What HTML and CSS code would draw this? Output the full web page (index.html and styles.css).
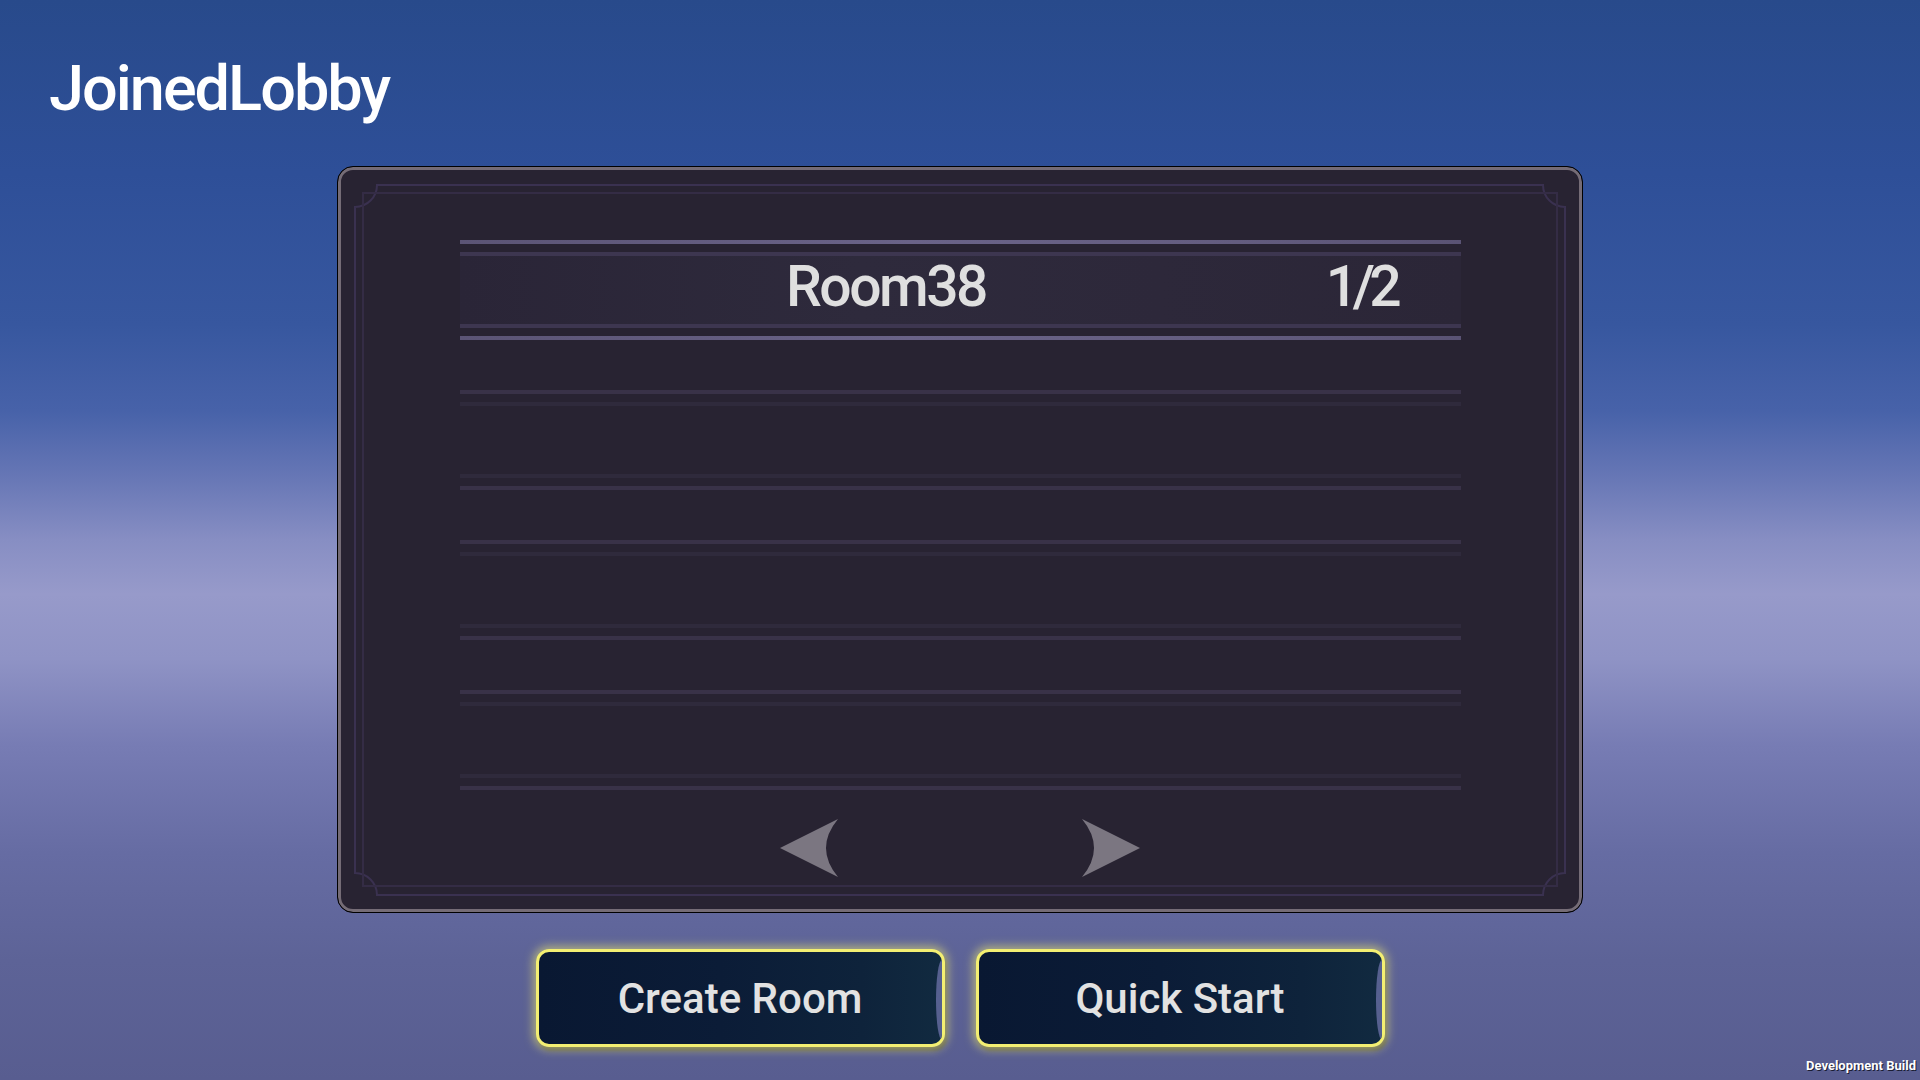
FILE: index.html
```html
<!DOCTYPE html>
<html lang="en">
<head>
<meta charset="utf-8">
<title>JoinedLobby</title>
<link rel="stylesheet" href="styles.css">
</head>
<body>
<div class="screen">
  <h1 class="title">JoinedLobby</h1>

  <section class="panel">
    <svg class="frame" width="1246" height="747" viewBox="0 0 1246 747" aria-hidden="true">
      <path d="M40 19 H1206 A22 22 0 0 0 1228 41 V707 A22 22 0 0 0 1206 729 H40 A22 22 0 0 0 18 707 V41 A22 22 0 0 0 40 19 Z" fill="none" stroke="#3a3150" stroke-width="2"/>
      <rect x="26" y="27" width="1194" height="693" fill="none" stroke="#342c45" stroke-width="2"/>
    </svg>

    <div class="room-list">
      <div class="room room-filled">
        <div class="room-inner">
          <span class="room-name">Room38</span>
          <span class="room-count">1/2</span>
          <span></span>
        </div>
      </div>
      <div class="room"><div class="room-inner"></div></div>
      <div class="room"><div class="room-inner"></div></div>
      <div class="room"><div class="room-inner"></div></div>
    </div>

    <div class="pager">
      <svg class="arrow" width="60" height="60" viewBox="0 0 60 60" aria-label="Previous page"><path d="M1 30 L59 1 Q35 30 59 59 Z" fill="#7b7681"/></svg>
      <svg class="arrow" width="60" height="60" viewBox="0 0 60 60" aria-label="Next page"><path d="M59 30 L1 1 Q25 30 1 59 Z" fill="#7b7681"/></svg>
    </div>
  </section>

  <div class="actions">
    <button class="btn">Create Room</button>
    <button class="btn">Quick Start</button>
  </div>

  <div class="dev-build">Development Build</div>
</div>
</body>
</html>
```
FILE: styles.css
```css
* { box-sizing: border-box; }

html, body {
  margin: 0;
  padding: 0;
  width: 1920px;
  height: 1080px;
  overflow: hidden;
}

body {
  background: linear-gradient(180deg,
    #284a8b 0%,
    #2e4f98 16%,
    #37579f 30%,
    #4762a9 38%,
    #6676b5 44%,
    #878ec3 50%,
    #979aca 55%,
    #8f93c5 61%,
    #777cb4 69%,
    #666ca3 79%,
    #5d6397 89%,
    #585d90 100%);
  font-family: Roboto, "Open Sans", sans-serif;
}

.screen {
  position: relative;
  width: 1920px;
  height: 1080px;
  display: flex;
  flex-direction: column;
  align-items: center;
}

.title {
  align-self: flex-start;
  margin: 57px 0 0 49px;
  height: 63px;
  font-family: Roboto, sans-serif;
  font-weight: 500;
  font-size: 63px;
  line-height: 63px;
  letter-spacing: -2px;
  color: #ffffff;
}

.panel {
  position: relative;
  margin-top: 46px;
  width: 1246px;
  height: 747px;
  border: 1px solid #000;
  border-radius: 16px;
  background: #282332;
  box-shadow: inset 0 0 0 3px #756c76;
  display: flex;
  flex-direction: column;
  align-items: center;
  padding-top: 73px;
}

.frame {
  position: absolute;
  left: -1px;
  top: -1px;
  pointer-events: none;
}

.room-list {
  position: relative;
  width: 1001px;
  display: flex;
  flex-direction: column;
  gap: 50px;
}

.room {
  height: 100px;
  padding: 8px 0;
  border-style: solid;
  border-width: 4px 0;
  border-color: #393248;
}

.room-inner {
  height: 76px;
  border-style: solid;
  border-width: 4px 0;
  border-color: #2f2a3c;
  display: grid;
  grid-template-columns: 853px 97px 1fr;
  align-items: start;
}

.room-filled {
  border-image: linear-gradient(90deg, #5b5475 0%, #6a6388 45%, #645d80 75%, #5a5374 100%) 1;
}

.room-filled .room-inner {
  border-color: #3d3650;
  background: linear-gradient(90deg, #2a2537 0%, #2e2a3c 40%, #2d283a 70%, #2b2637 100%);
}

.room-name,
.room-count {
  font-family: Roboto, sans-serif;
  font-weight: 500;
  font-size: 57px;
  line-height: 58px;
  color: #dfdfdf;
  text-align: center;
  padding-top: 2px;
  white-space: nowrap;
}

.room-name { letter-spacing: -2.5px; }
.room-count { letter-spacing: -5.5px; }

.pager {
  margin-top: 28px;
  display: flex;
  gap: 242px;
}

.arrow { display: block; }

.actions {
  margin-top: 36px;
  display: flex;
  gap: 31px;
}

.btn {
  position: relative;
  width: 409px;
  height: 98px;
  border: 3px solid #f3ef72;
  border-radius: 13px;
  background: linear-gradient(90deg, #091832 0%, #0b1c37 45%, #0e233b 80%, #112a40 100%);
  box-shadow: 0 0 10px 3px rgba(242, 236, 110, 0.55), 2px 4px 3px rgba(70, 70, 30, 0.5);
  color: #e2e2e2;
  font-family: Roboto, "Open Sans", sans-serif;
  font-weight: 500;
  font-size: 42px;
  line-height: 1;
  padding: 2px 0 0 0;
  overflow: hidden;
}

.btn::after {
  content: "";
  position: absolute;
  right: 0;
  top: 8px;
  bottom: 4px;
  width: 6px;
  background: #56608f;
  border-radius: 100% 0 0 100% / 50% 0 0 50%;
}

.dev-build {
  position: absolute;
  right: 4px;
  bottom: 6px;
  font-family: Roboto, sans-serif;
  font-weight: 700;
  font-size: 13px;
  line-height: 16px;
  color: #ffffff;
  text-shadow: 1px 1px 0 #1a1d33;
}
```
